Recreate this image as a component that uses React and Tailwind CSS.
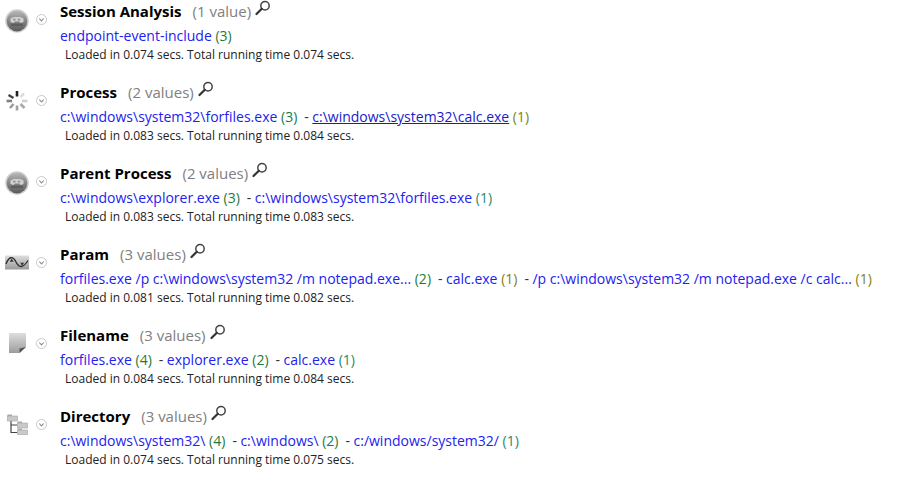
const GREEN = "text-[#1f7a3a]";
const TEAL = "text-[#1f8a70]";
const OLIVE = "text-[#7f7f10]";

function Magnifier() {
  return (
    <svg width="16" height="16" viewBox="0 0 16 16" className="shrink-0 ml-[4px] -mt-[7px]">
      <circle cx="10" cy="5.7" r="4.2" fill="none" stroke="#444" strokeWidth="1.5" />
      <line x1="6.8" y1="8.8" x2="1.5" y2="14" stroke="#333" strokeWidth="2.2" strokeLinecap="round" />
    </svg>
  );
}

function Chevron() {
  return (
    <svg width="11" height="11" viewBox="0 0 11 11" className="block mt-[1px]">
      <circle cx="5.5" cy="5.5" r="5" fill="#fff" stroke="#c2c2c2" strokeWidth="0.9" />
      <path d="M3.3 4.5 L5.5 6.9 L7.7 4.5" fill="none" stroke="#8a8a8a" strokeWidth="1.1" />
    </svg>
  );
}

function IconRound() {
  return (
    <svg width="24" height="24" viewBox="0 0 24 24" className="mt-[3px]">
      <defs>
        <linearGradient id="rg" x1="0" y1="0" x2="0" y2="1">
          <stop offset="0" stopColor="#b8b8b8" />
          <stop offset="0.5" stopColor="#858585" />
          <stop offset="1" stopColor="#5a5a5a" />
        </linearGradient>
      </defs>
      <circle cx="12" cy="12" r="11.8" fill="#cfcfcf" />
      <circle cx="12" cy="12" r="10.4" fill="url(#rg)" />
      <path d="M5.5 9.5 L9 8 L15 8 L18.5 9.5 L18.5 13 L15.5 14 L14.5 12.5 L10 12.5 L8.5 14 L5.5 13 Z" fill="#d2d2d2" />
      <rect x="8" y="9.6" width="2.6" height="2" fill="#9a9a9a" />
      <rect x="12.7" y="9.6" width="2.6" height="2" fill="#9a9a9a" />
      <rect x="6" y="14.6" width="12" height="2.4" fill="#4e4e4e" opacity="0.6" />
    </svg>
  );
}

function IconSpinner() {
  const bars = [
    [12, 2, 12, 7.5, "#222"],
    [15.5, 8, 19, 4.5, "#dcdcdc"],
    [17, 12, 22.5, 12, "#d0d0d0"],
    [15.5, 15, 19.5, 19, "#aaa"],
    [12, 16.5, 12, 21.5, "#a0a0a0"],
    [8.5, 15, 5, 19, "#999"],
    [7, 12, 1.5, 12, "#808080"],
    [8.5, 9, 3.5, 6, "#444"],
  ];
  return (
    <svg width="24" height="24" viewBox="0 0 24 24" className="mt-[1px]">
      {bars.map((b, i) => (
        <line key={i} x1={b[0]} y1={b[1]} x2={b[2]} y2={b[3]} stroke={b[4]} strokeWidth="2.6" />
      ))}
    </svg>
  );
}

function IconWave() {
  return (
    <svg width="24" height="15" viewBox="0 0 24 15">
      <defs>
        <linearGradient id="wg" x1="0" y1="0" x2="0" y2="1">
          <stop offset="0" stopColor="#dedede" />
          <stop offset="1" stopColor="#9a9a9a" />
        </linearGradient>
      </defs>
      <rect width="24" height="14" y="0.5" fill="url(#wg)" />
      <path d="M1 9 C4 1 8 1 11 7 C14 13 18 13.5 23 5.5" fill="none" stroke="#2b2b2b" strokeWidth="1.3" />
      <path d="M4.7 6.8 L6.7 3.6 L8.7 6.8 Z" fill="#333" />
      <path d="M15.3 7.8 L19 7.8 L17.2 10.8 Z" fill="#333" />
    </svg>
  );
}

function IconFile() {
  return (
    <svg width="17" height="20" viewBox="0 0 17 20">
      <defs>
        <linearGradient id="fg" x1="0" y1="0" x2="0" y2="1">
          <stop offset="0" stopColor="#dedede" />
          <stop offset="1" stopColor="#9c9c9c" />
        </linearGradient>
      </defs>
      <path d="M0 0 H17 V14 L10.5 20 H0 Z" fill="url(#fg)" />
      <path d="M17 14 L10.5 20 L10.5 15.5 Z" fill="#555" />
    </svg>
  );
}

function Folder({ x, y }) {
  return (
    <g>
      <rect x={x} y={y} width="4.5" height="2" fill="#aaa" />
      <rect x={x} y={y + 1.5} width="10" height="5" fill="#c9c9c9" stroke="#a2a2a2" strokeWidth="0.6" />
    </g>
  );
}

function IconTree() {
  return (
    <svg width="21" height="21" viewBox="0 0 21 21">
      <path d="M4 6 V18.5 H10.5 M4 11 H10.5" fill="none" stroke="#444" strokeWidth="1.2" />
      <Folder x={0.5} y={0.5} />
      <Folder x={10.5} y={7.5} />
      <Folder x={10.5} y={14.5} />
    </svg>
  );
}

function Value({ text, n, color, underline }) {
  return (
    <span>
      <span className={underline ? "text-[#1a1ac8] underline" : "text-[#2222ee]"}>{text}</span>{" "}
      <span className={color}>({n})</span>
    </span>
  );
}

function Sep() {
  return <span className="text-[#333] ml-[7px] mr-[3.5px]">-</span>;
}

function Section({ icon, title, count, values, loaded, total }) {
  return (
    <div className="flex h-[81px]">
      <div className="w-[36px] h-[38px] shrink-0 pl-[5px] pr-[7px] flex items-center justify-center">{icon}</div>
      <div className="w-[24px] h-[38px] flex items-center shrink-0">
        <Chevron />
      </div>
      <div className="flex flex-col">
        <div className="flex items-center h-[23px]">
          <span className="font-bold text-[15px] text-black">{title}</span>
          <span className="text-[15px] text-[#808080] ml-[11px]">({count})</span>
          <Magnifier />
        </div>
        <div className="h-[20px] mt-[2px] flex items-center text-[14px] whitespace-pre">
          {values.map((v, i) => (
            <span key={i}>
              {i > 0 && <Sep />}
              <Value {...v} />
            </span>
          ))}
        </div>
        <div className="text-[12px] text-[#222] ml-[5px] h-[16px] leading-[16px] mt-[2px]">
          Loaded in {loaded} secs. Total running time {total} secs.
        </div>
      </div>
    </div>
  );
}

export default function App() {
  return (
    <div className="w-[901px] h-[484px] bg-white overflow-hidden font-['Open_Sans',sans-serif]">
      <Section
        icon={<IconRound />}
        title="Session Analysis"
        count="1 value"
        values={[{ text: "endpoint-event-include", n: 3, color: GREEN }]}
        loaded="0.074"
        total="0.074"
      />
      <Section
        icon={<IconSpinner />}
        title="Process"
        count="2 values"
        values={[
          { text: "c:\\windows\\system32\\forfiles.exe", n: 3, color: GREEN },
          { text: "c:\\windows\\system32\\calc.exe", n: 1, color: OLIVE, underline: true },
        ]}
        loaded="0.083"
        total="0.084"
      />
      <Section
        icon={<IconRound />}
        title="Parent Process"
        count="2 values"
        values={[
          { text: "c:\\windows\\explorer.exe", n: 3, color: GREEN },
          { text: "c:\\windows\\system32\\forfiles.exe", n: 1, color: TEAL },
        ]}
        loaded="0.083"
        total="0.083"
      />
      <Section
        icon={<IconWave />}
        title="Param"
        count="3 values"
        values={[
          { text: "forfiles.exe /p c:\\windows\\system32 /m notepad.exe...", n: 2, color: GREEN },
          { text: "calc.exe", n: 1, color: OLIVE },
          { text: "/p c:\\windows\\system32 /m notepad.exe /c calc...", n: 1, color: OLIVE },
        ]}
        loaded="0.081"
        total="0.082"
      />
      <Section
        icon={<IconFile />}
        title="Filename"
        count="3 values"
        values={[
          { text: "forfiles.exe", n: 4, color: GREEN },
          { text: "explorer.exe", n: 2, color: GREEN },
          { text: "calc.exe", n: 1, color: TEAL },
        ]}
        loaded="0.084"
        total="0.084"
      />
      <Section
        icon={<IconTree />}
        title="Directory"
        count="3 values"
        values={[
          { text: "c:\\windows\\system32\\", n: 4, color: GREEN },
          { text: "c:\\windows\\", n: 2, color: GREEN },
          { text: "c:/windows/system32/", n: 1, color: TEAL },
        ]}
        loaded="0.074"
        total="0.075"
      />
    </div>
  );
}
